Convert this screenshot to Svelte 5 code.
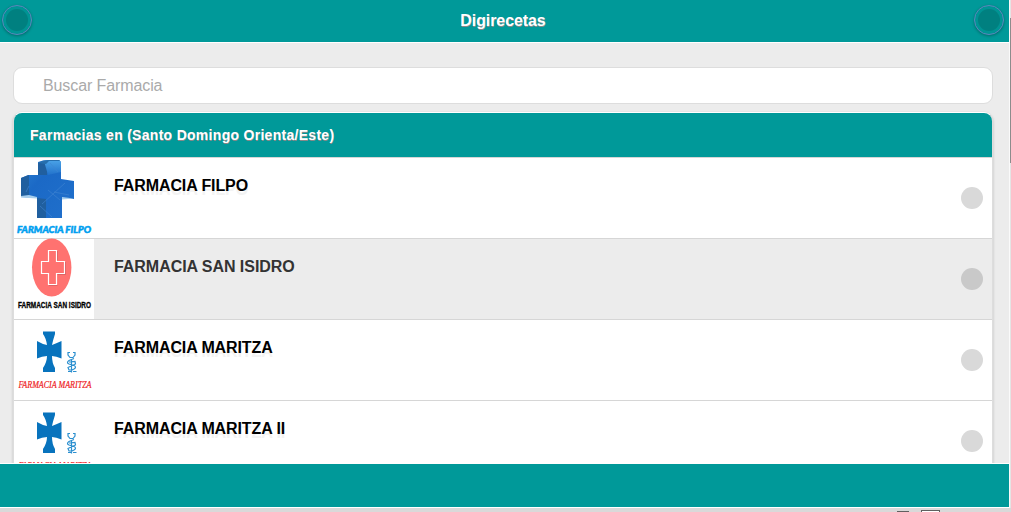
<script>
  let search = $state("");

  const farmacias = [
    { name: "FARMACIA FILPO", logo: "filpo" },
    { name: "FARMACIA SAN ISIDRO", logo: "isidro", active: true },
    { name: "FARMACIA MARITZA", logo: "maritza" },
    { name: "FARMACIA MARITZA II", logo: "maritza" },
  ];
</script>

<div class="window">
  <div class="page">
    <header>
      <button class="round" aria-label="Volver"><span></span></button>
      <h1>Digirecetas</h1>
      <button class="round" aria-label="Opciones"><span></span></button>
    </header>

    <main>
      <input class="search" type="text" placeholder="Buscar Farmacia" bind:value={search} />

      <div class="list">
        <h2>Farmacias en (Santo Domingo Orienta/Este)</h2>
        {#each farmacias as farmacia}
          <div class="row" class:active={farmacia.active}>
            <svg class="logo" width="80" height="80" viewBox="0 0 80 80">
              <rect width="80" height="80" fill="#fff" />
              {#if farmacia.logo == "filpo"}
                <defs>
                  <linearGradient id="blue" x1="0" y1="0" x2="1" y2="1">
                    <stop offset="0" stop-color="#2a7fd2" />
                    <stop offset=".35" stop-color="#1b69c6" />
                    <stop offset="1" stop-color="#2070cc" />
                  </linearGradient>
                  <linearGradient id="shine" x1="0" y1="0" x2="0" y2="1">
                    <stop offset="0" stop-color="#4ba4e8" />
                    <stop offset="1" stop-color="#2272cb" />
                  </linearGradient>
                </defs>
                <path d="M24 4Q29 2 34 2H45L47 4V21L60 23V41L48 40V60H23V40L7 39V20L14 17H24Z" fill="url(#blue)" />
                <path d="M24 5 33 3V17H24ZM7 20 15 17V37L7 39ZM23 40 32 41V60H23Z" fill="#205f9f" />
                <path d="M30 3 34 2H45L47 4V14L34 17Z" fill="url(#shine)" />
                <path d="M24 5Q29 2 34 2H45L46 3H35L32 6Z" fill="#266fae" />
                <path d="M7 38 15 37 23 39V40.500L7 39.500ZM48 39 60 40.500 48 41.500Z" fill="#a5cdec" />
                <path d="M15 28 12 34M28 46 51 25M34 32 46 42M40 34 55 37M26 48 38 59M36 5 44 14" fill="none" stroke="#3f85d2" stroke-width=".6" />
                <text class="filpo" x="3" y="75" textLength="74" lengthAdjust="spacingAndGlyphs">FARMACIA FILPO</text>
              {:else if farmacia.logo == "isidro"}
                <ellipse cx="37.7" cy="28.5" rx="19.7" ry="29" fill="#ff7270" />
                <path d="M34.500 11.500H42.500V22.500H50.500V34.500H42.500V45.500H34.500V34.500H27.500V22.500H34.500Z" fill="none" stroke="#fff" stroke-width="1.200" />
                <path d="M43.500 12V21.500M51.500 23V35.500H43.500M35 46.500H43.500" fill="none" stroke="#c45b60" stroke-width=".6" />
                <text class="isidro" x="4" y="69" textLength="73" lengthAdjust="spacingAndGlyphs">FARMACIA SAN ISIDRO</text>
              {:else}
                <path d="M29 11.500H41V14Q39 20 38 25Q43 23 47.500 21V38.500Q42 36 38 36Q38 43 41 48V52H29V48Q33 42 33 36Q28 36 23 38.500V21Q28 24 33 25Q32 18 29 14Z" fill="#0873bd" />
                <g fill="none" stroke="#2b8fcf" stroke-width="1.200">
                  <path d="M56 32.500H54V35L56 37.500H59L61 35V32.500H59" />
                  <path d="M60 38.500 55 40.500Q52 42.500 55 44L60 45.500Q63 47 60 49L57 50.500M55 42 61 41.500L61.500 44L54 47.500L55 50H58M57.500 39V52.500M54 51.500H57M59 51.500H62.500" />
                </g>
                <text class="maritza" x="4.500" y="68" textLength="73" lengthAdjust="spacingAndGlyphs">FARMACIA MARITZA</text>
              {/if}
            </svg>
            <h3>{farmacia.name}</h3>
            <span class="dot"></span>
          </div>
        {/each}
      </div>
    </main>

    <footer></footer>
  </div>

  <div class="scrollbar"><div class="thumb"></div></div>

  <div class="bottom">
    <i class="tab"></i>
    <i class="box"></i>
  </div>
</div>

<style>
  :global(body) {
    background: #ececec;
    overflow: hidden;
  }
  .window {
    display: grid;
    grid-template-columns: 1009px 2px;
    grid-template-rows: 508px 4px;
    width: 1011px;
    height: 512px;
    overflow: hidden;
    font-family: "Liberation Sans", Arial, sans-serif;
  }
  .page {
    display: flex;
    flex-direction: column;
    height: 508px;
    background: #ececec;
  }
  header {
    display: flex;
    justify-content: space-between;
    align-items: flex-start;
    flex: none;
    box-sizing: border-box;
    height: 43px;
    padding: 5px 5px 0 2px;
    background: #009999;
    border-bottom: 1px solid #fff;
  }
  h1 {
    margin: 0;
    font-size: 16px;
    line-height: 31px;
    letter-spacing: -0.08px;
    color: #fff;
    text-shadow: 0 1px 0 #888;
  }
  .round {
    display: flex;
    align-items: center;
    justify-content: center;
    box-sizing: border-box;
    width: 30px;
    height: 30px;
    padding: 0;
    border: 1px solid #5c86bd;
    border-radius: 50%;
    background: #009494;
    box-shadow: 0 1px 3px rgba(0, 0, 0, 0.3);
  }
  .round span {
    width: 22px;
    height: 22px;
    border-radius: 50%;
    background: #008080;
  }
  main {
    flex: none;
    box-sizing: border-box;
    height: 420px;
    padding: 24px 16px 0 13px;
    overflow: hidden;
  }
  .search {
    display: block;
    box-sizing: border-box;
    width: 980px;
    height: 37px;
    margin: 0 0 8px;
    padding: 0 29px;
    border: 1px solid #ddd;
    border-radius: 9px;
    background: #fff;
    font-family: inherit;
    font-size: 16px;
    letter-spacing: -0.1px;
    outline: none;
  }
  .search::placeholder {
    color: #aaa;
  }
  .list {
    box-sizing: border-box;
    width: 980px;
    border: 1px solid #ddd;
    border-top-color: #fff;
    border-radius: 9px;
    overflow: hidden;
    background: #fff;
    box-shadow: 0 1px 3px rgba(0, 0, 0, 0.2);
  }
  h2 {
    height: 44px;
    margin: 0;
    padding-left: 16px;
    background: #009999;
    color: #fff;
    font-size: 14px;
    line-height: 44px;
    letter-spacing: 0.29px;
    text-shadow: 0 1px 0 #888;
  }
  .row {
    display: flex;
    align-items: center;
    box-sizing: border-box;
    height: 81px;
    border-top: 1px solid #d6d6d6;
    background: #fff;
  }
  .row.active {
    background: #ececec;
  }
  .logo {
    flex: none;
    display: block;
    overflow: visible;
  }
  h3 {
    flex: 1;
    align-self: flex-start;
    margin: 0;
    padding: 18px 0 0 20px;
    font-size: 16px;
    line-height: 20px;
    letter-spacing: -0.1px;
    color: #000;
    text-shadow: 0 4px 0 #f3f3f3;
  }
  .active h3 {
    color: #333;
    letter-spacing: -0.05px;
    text-shadow: none;
  }
  .dot {
    width: 22px;
    height: 22px;
    margin-right: 9px;
    border-radius: 50%;
    background: #d9d9d9;
  }
  .active .dot {
    background: #c9c9c9;
  }
  .filpo {
    font: italic 900 9px "Lato", sans-serif;
    fill: #009ff0;
    stroke: #009ff0;
    stroke-width: 0.5px;
  }
  .isidro {
    font: bold 8.5px "Liberation Sans", sans-serif;
    fill: #000;
    stroke: #000;
    stroke-width: 0.3px;
  }
  .maritza {
    font: italic 10px "Liberation Serif", serif;
    fill: #ee1c24;
    stroke: #ee1c24;
    stroke-width: 0.2px;
  }
  footer {
    flex: none;
    box-sizing: border-box;
    height: 45px;
    background: #009999;
    border-top: 1px solid #fff;
    border-bottom: 1px solid #fff;
  }
  .scrollbar {
    box-sizing: border-box;
    padding-top: 18px;
    border-left: 1px solid #fafafa;
    background: #e4e4e4;
  }
  .thumb {
    height: 145px;
    background: #8c8c8c;
  }
  .bottom {
    grid-column: 1 / 3;
    display: flex;
    align-items: flex-end;
    box-sizing: border-box;
    height: 4px;
    padding-left: 897px;
    background: #d9d9d9;
  }
  .tab {
    width: 12px;
    height: 1px;
    margin-right: 12px;
    background: #606060;
  }
  .box {
    box-sizing: border-box;
    width: 19px;
    height: 2px;
    border: 1px solid #606060;
    border-bottom: 0;
    background: #fff;
  }
</style>
